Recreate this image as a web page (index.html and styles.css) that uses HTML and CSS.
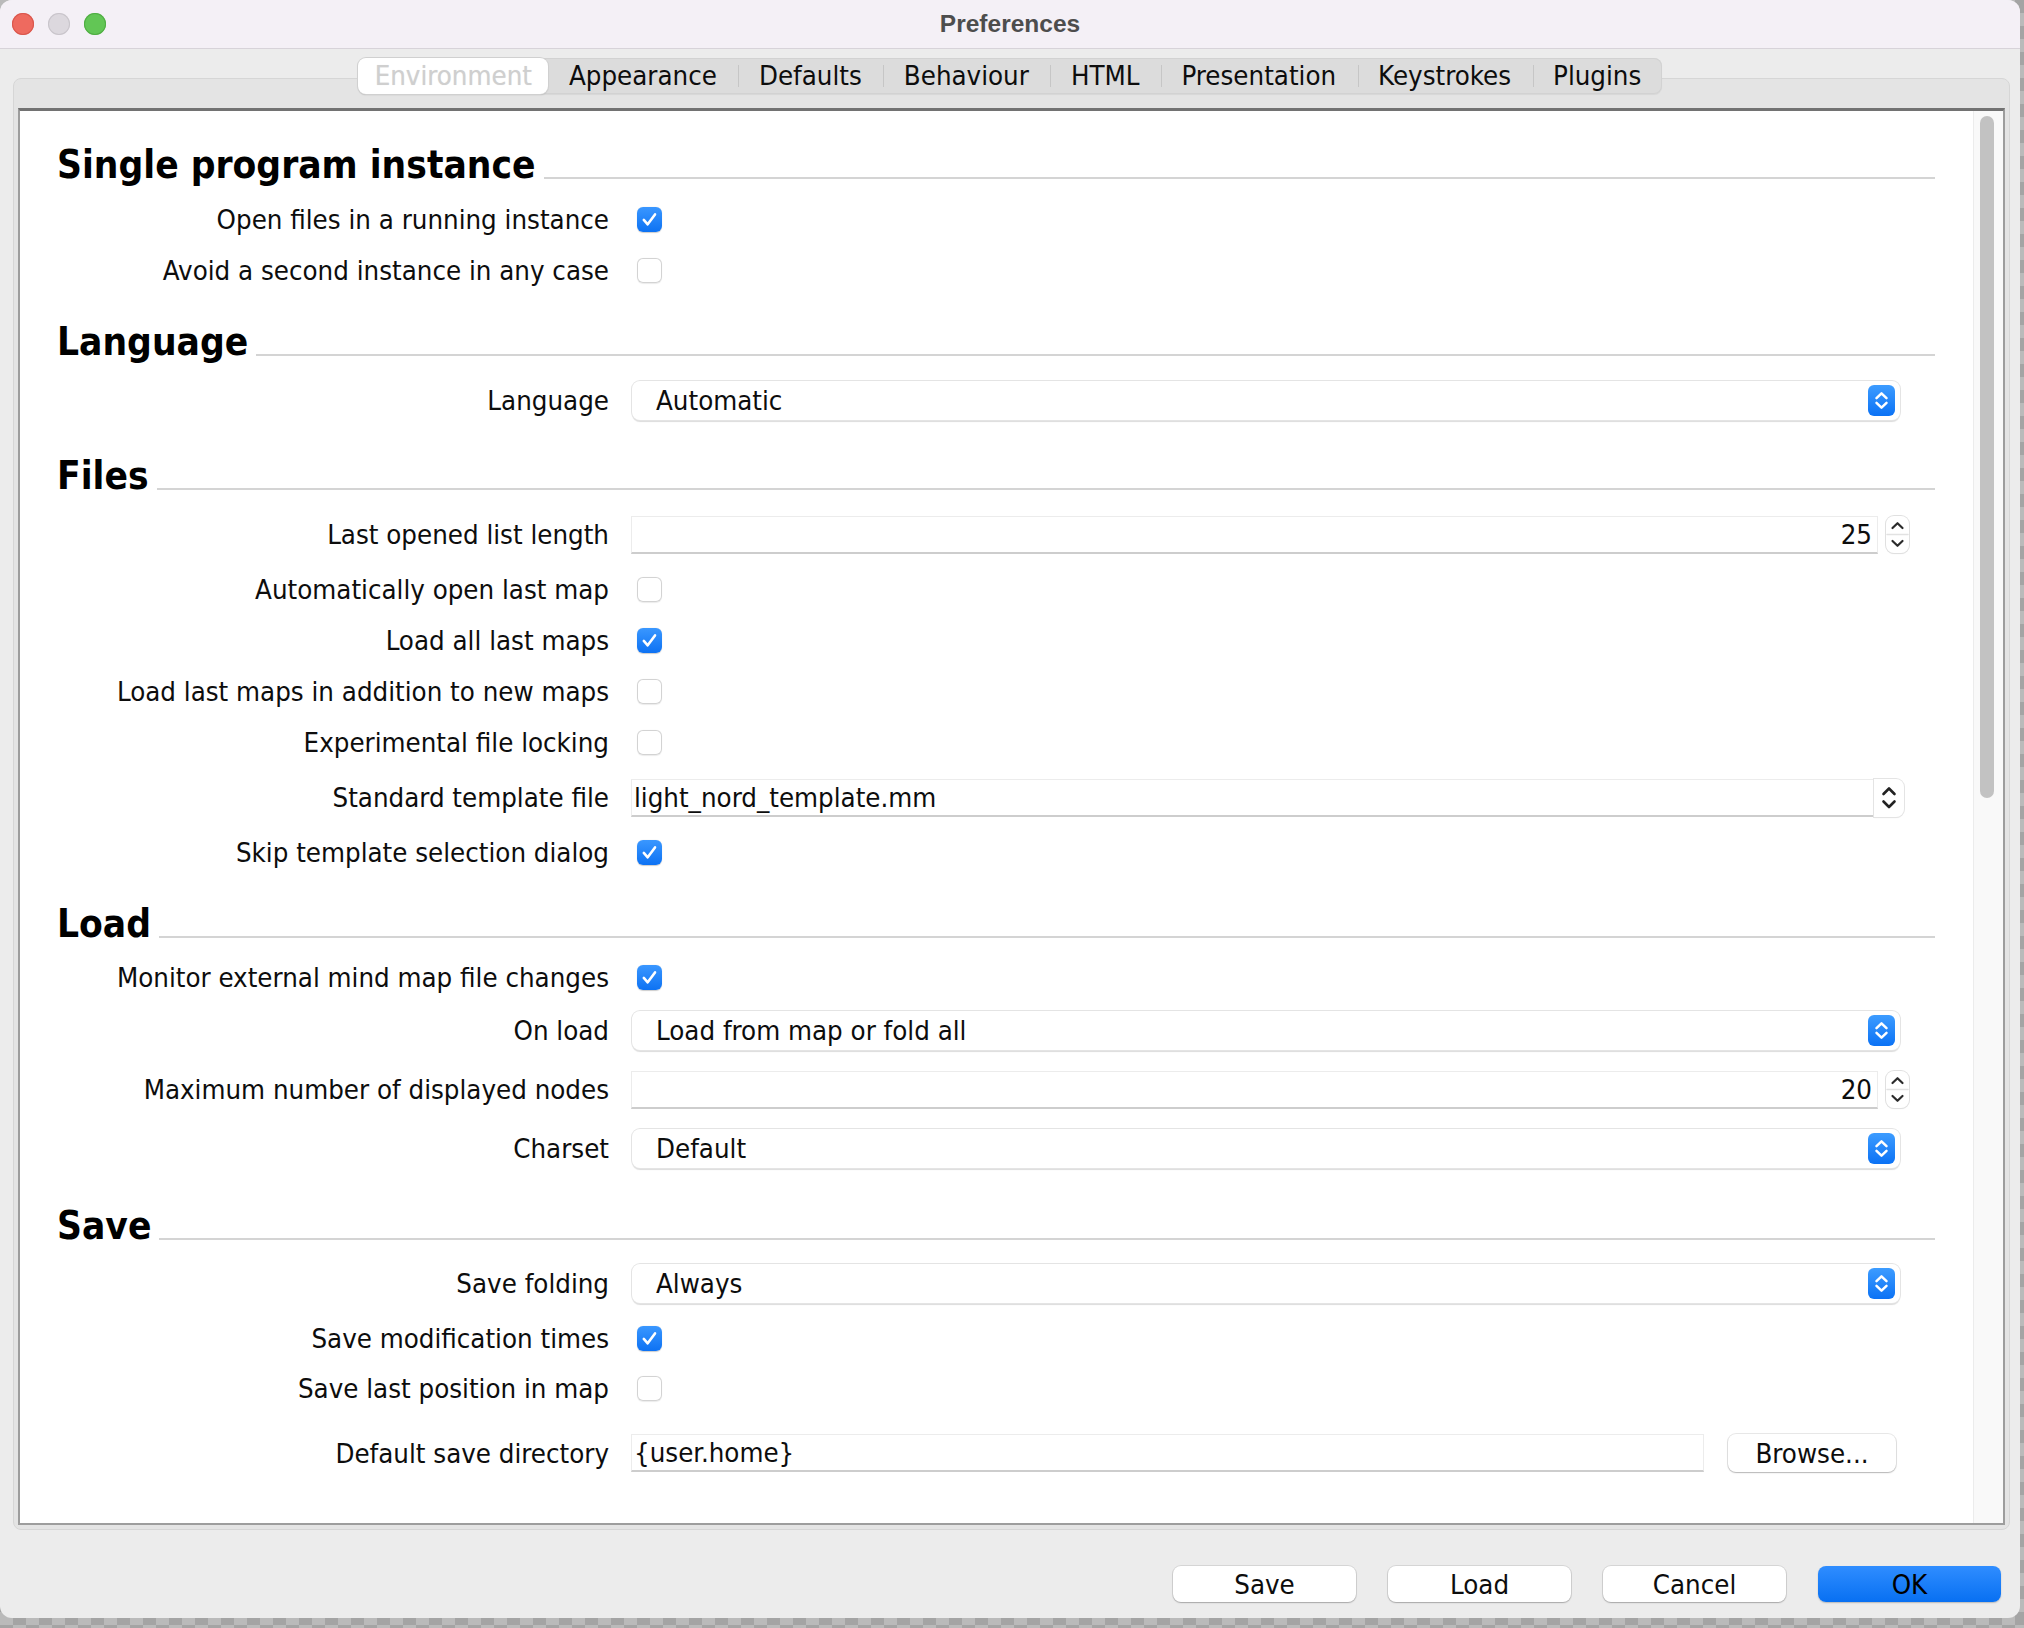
FILE: index.html
```html
<!DOCTYPE html>
<html lang="en">
<head>
<meta charset="utf-8">
<title>Preferences</title>
<link rel="stylesheet" href="styles.css">
</head>
<body>
<div class="window">
  <header class="titlebar">
    <div class="lights">
      <span class="light red"></span>
      <span class="light idle"></span>
      <span class="light green"></span>
    </div>
    <div class="title">Preferences</div>
    <div></div>
  </header>

  <nav class="tabs">
    <span class="tab selected">Environment</span>
    <span class="tab">Appearance</span>
    <span class="tab sep">Defaults</span>
    <span class="tab sep">Behaviour</span>
    <span class="tab sep">HTML</span>
    <span class="tab sep">Presentation</span>
    <span class="tab sep">Keystrokes</span>
    <span class="tab sep">Plugins</span>
  </nav>

  <div class="pane">
    <div class="content">
      <div class="scroll-area">

        <div class="section-title"><h2>Single program instance</h2><span class="rule"></span></div>
        <div class="row row-cb"><span class="lbl">Open files in a running instance</span><div class="ctl"><span class="cb on"><svg viewBox="0 0 25 25" width="25" height="25"><path d="M6.8 12.9 L10.7 17.3 L18 7.4" /></svg></span></div></div>
        <div class="row row-cb"><span class="lbl">Avoid a second instance in any case</span><div class="ctl"><span class="cb"></span></div></div>

        <div class="section-title"><h2>Language</h2><span class="rule"></span></div>
        <div class="row row-ctl"><span class="lbl">Language</span><div class="ctl">
          <div class="combo"><span>Automatic</span><span class="combo-btn"><svg viewBox="0 0 27 31" width="27" height="31"><path d="M8.5 13.2 L13.5 8.4 L18.5 13.2 M8.5 17.8 L13.5 22.6 L18.5 17.8" /></svg></span></div>
        </div></div>

        <div class="section-title"><h2>Files</h2><span class="rule"></span></div>
        <div class="row row-ctl"><span class="lbl">Last opened list length</span><div class="ctl">
          <div class="field num">25</div>
          <span class="spinner"><svg viewBox="0 0 23 37" width="23" height="37"><path class="div" d="M1 18.5 H22" /><path d="M6.5 12 L11.5 7.2 L16.5 12 M6.5 25 L11.5 29.8 L16.5 25" /></svg></span>
        </div></div>
        <div class="row row-cb"><span class="lbl">Automatically open last map</span><div class="ctl"><span class="cb"></span></div></div>
        <div class="row row-cb"><span class="lbl">Load all last maps</span><div class="ctl"><span class="cb on"><svg viewBox="0 0 25 25" width="25" height="25"><path d="M6.8 12.9 L10.7 17.3 L18 7.4" /></svg></span></div></div>
        <div class="row row-cb"><span class="lbl">Load last maps in addition to new maps</span><div class="ctl"><span class="cb"></span></div></div>
        <div class="row row-cb"><span class="lbl">Experimental file locking</span><div class="ctl"><span class="cb"></span></div></div>
        <div class="row row-ctl"><span class="lbl">Standard template file</span><div class="ctl">
          <div class="field edit">light_nord_template.mm</div>
          <span class="edit-arrow"><svg viewBox="0 0 30 38" width="30" height="38"><path d="M9.5 15 L15 9.5 L20.5 15 M9.5 22.5 L15 28 L20.5 22.5" /></svg></span>
        </div></div>
        <div class="row row-cb"><span class="lbl">Skip template selection dialog</span><div class="ctl"><span class="cb on"><svg viewBox="0 0 25 25" width="25" height="25"><path d="M6.8 12.9 L10.7 17.3 L18 7.4" /></svg></span></div></div>

        <div class="section-title"><h2>Load</h2><span class="rule"></span></div>
        <div class="row row-cb row-tight"><span class="lbl">Monitor external mind map file changes</span><div class="ctl"><span class="cb on"><svg viewBox="0 0 25 25" width="25" height="25"><path d="M6.8 12.9 L10.7 17.3 L18 7.4" /></svg></span></div></div>
        <div class="row row-ctl"><span class="lbl">On load</span><div class="ctl">
          <div class="combo"><span>Load from map or fold all</span><span class="combo-btn"><svg viewBox="0 0 27 31" width="27" height="31"><path d="M8.5 13.2 L13.5 8.4 L18.5 13.2 M8.5 17.8 L13.5 22.6 L18.5 17.8" /></svg></span></div>
        </div></div>
        <div class="row row-ctl"><span class="lbl">Maximum number of displayed nodes</span><div class="ctl">
          <div class="field num">20</div>
          <span class="spinner"><svg viewBox="0 0 23 37" width="23" height="37"><path class="div" d="M1 18.5 H22" /><path d="M6.5 12 L11.5 7.2 L16.5 12 M6.5 25 L11.5 29.8 L16.5 25" /></svg></span>
        </div></div>
        <div class="row row-ctl"><span class="lbl">Charset</span><div class="ctl">
          <div class="combo"><span>Default</span><span class="combo-btn"><svg viewBox="0 0 27 31" width="27" height="31"><path d="M8.5 13.2 L13.5 8.4 L18.5 13.2 M8.5 17.8 L13.5 22.6 L18.5 17.8" /></svg></span></div>
        </div></div>

        <div class="section-title section-wide"><h2>Save</h2><span class="rule"></span></div>
        <div class="row row-ctl"><span class="lbl">Save folding</span><div class="ctl">
          <div class="combo"><span>Always</span><span class="combo-btn"><svg viewBox="0 0 27 31" width="27" height="31"><path d="M8.5 13.2 L13.5 8.4 L18.5 13.2 M8.5 17.8 L13.5 22.6 L18.5 17.8" /></svg></span></div>
        </div></div>
        <div class="row row-cb row-save"><span class="lbl">Save modification times</span><div class="ctl"><span class="cb on"><svg viewBox="0 0 25 25" width="25" height="25"><path d="M6.8 12.9 L10.7 17.3 L18 7.4" /></svg></span></div></div>
        <div class="row row-cb row-save"><span class="lbl">Save last position in map</span><div class="ctl"><span class="cb"></span></div></div>
        <div class="row row-dir"><span class="lbl">Default save directory</span><div class="ctl">
          <div class="field edit">{user.home}</div>
          <span class="btn browse">Browse...</span>
        </div></div>

      </div>
      <div class="scrollbar"><div class="thumb"></div></div>
    </div>
  </div>

  <div class="actions">
    <span class="btn">Save</span>
    <span class="btn">Load</span>
    <span class="btn">Cancel</span>
    <span class="btn default">OK</span>
  </div>
</div>
</body>
</html>
```

FILE: styles.css
```css
* { box-sizing: border-box; }

html, body {
  margin: 0;
  padding: 0;
}

body {
  width: 2024px;
  height: 1628px;
  overflow: hidden;
  background: repeating-conic-gradient(#a4a4a4 0 25%, #bababa 0 50%) 0 0 / 26px 26px;
  font-family: "DejaVu Sans Condensed", "Liberation Sans", Arial, sans-serif;
  font-size: 27.4px;
  color: #0d0d0d;
}

.window {
  width: 2020px;
  height: 1618px;
  background: #ececec;
  border-radius: 12px;
  overflow: hidden;
  display: flex;
  flex-direction: column;
}

/* title bar */
.titlebar {
  height: 49px;
  flex: none;
  background: #f4f0f6;
  border-bottom: 1px solid #d7d3d9;
  display: grid;
  grid-template-columns: 1fr auto 1fr;
  align-items: center;
}

.lights {
  display: flex;
  gap: 14px;
  padding-left: 12px;
}

.light {
  width: 22px;
  height: 22px;
  border-radius: 50%;
}
.light.red { background: #ee6a5f; box-shadow: inset 0 0 0 1px #d9574d; }
.light.idle { background: #dcd8de; box-shadow: inset 0 0 0 1px #c9c5cb; }
.light.green { background: #62c655; box-shadow: inset 0 0 0 1px #50ad44; }

.title {
  font-family: "Liberation Sans", Arial, sans-serif;
  font-weight: 700;
  font-size: 24.5px;
  color: #4d4d4d;
}

/* tabs */
.tabs {
  align-self: center;
  margin-top: 9px;
  height: 36px;
  display: flex;
  align-items: stretch;
  background: #dcdcdc;
  border-radius: 8px;
  box-shadow: inset 0 0 0 1px #d2d2d2, 0 1px 1px rgba(0,0,0,0.06);
  position: relative;
  z-index: 1;
}

.tab {
  display: flex;
  align-items: center;
  padding: 0 20.5px;
  color: #0d0d0d;
  line-height: 1;
}

.tab.sep {
  border-left: 1px solid transparent;
  background: linear-gradient(#c6c6c6, #c6c6c6) left center / 1px 22px no-repeat;
}

.tab.selected {
  padding: 0 16.5px;
  background: #fff;
  border-radius: 8px;
  color: #cfcfcf;
  text-shadow: 0 0 1px #e6e6e6;
  box-shadow: 0 0 0 1px #d0d0d0, 0 1px 1.5px rgba(0,0,0,0.18);
}

/* pane */
.pane {
  margin: -16px 10px 0 13px;
  height: 1452px;
  flex: none;
  background: #e4e4e4;
  border: 1px solid #d6d6d6;
  border-radius: 8px;
  padding: 29px 4px 4px 4px;
}

.content {
  height: 1417px;
  background: #fff;
  border: 2px solid #9d9d9d;
  border-top: 3px solid #727272;
  display: flex;
  overflow: hidden;
}

.scroll-area {
  flex: 1;
  padding: 8px 38px 0 37px;
  overflow: hidden;
}

.scrollbar {
  width: 30px;
  flex: none;
  background: #f9f9f9;
  border-left: 1px solid #ececec;
  padding: 5px 0 0 6px;
}

.thumb {
  width: 14px;
  height: 682px;
  border-radius: 7px;
  background: #c2c2c2;
}

/* sections */
.section-title {
  height: 75px;
  padding-top: 18px;
  display: flex;
  align-items: center;
}

.section-title.section-wide {
  height: 76px;
  padding-top: 20px;
}

.section-title h2 {
  margin: 0;
  font-size: 38.5px;
  font-weight: 700;
  line-height: 1;
  color: #000;
  flex: none;
}

.rule {
  flex: 1;
  height: 2px;
  margin: 25px 0 0 8px;
  background: #d4d4d4;
}

.row {
  display: flex;
  align-items: center;
}

.row-cb { height: 51px; }
.row-cb.row-tight { height: 48px; }
.row-cb.row-save { height: 50px; }
.row-ctl { height: 59px; }
.row-dir { height: 80px; }

.lbl {
  width: 552px;
  flex: none;
  text-align: right;
  white-space: nowrap;
}

.ctl {
  flex: 1;
  margin-left: 22px;
  display: flex;
  align-items: center;
}

/* checkbox */
.cb {
  width: 25px;
  height: 25px;
  margin-left: 6px;
  border-radius: 6px;
  background: #fff;
  box-shadow: inset 0 0 0 1px #d3d3d3, 0 0.5px 1px rgba(0,0,0,0.08);
  display: flex;
}

.cb.on {
  background: linear-gradient(#3a97ff, #0d72f3);
  box-shadow: 0 0.5px 1px rgba(0,0,0,0.2);
}

.cb svg path {
  fill: none;
  stroke: #fff;
  stroke-width: 2.6;
  stroke-linecap: round;
  stroke-linejoin: round;
}

/* combo */
.combo {
  flex: 1;
  margin: 0 35px 0 1px;
  height: 39px;
  background: #fff;
  border-radius: 8px;
  box-shadow: 0 0 0 1px #e4e4e4, 0 1.5px 1px rgba(0,0,0,0.14);
  display: flex;
  align-items: center;
  justify-content: space-between;
  padding: 0 5px 0 24px;
  white-space: nowrap;
}

.combo-btn {
  width: 27px;
  height: 31px;
  border-radius: 6px;
  background: linear-gradient(#3d9cff, #0b72f5);
  display: flex;
}

.combo-btn svg path {
  fill: none;
  stroke: #fff;
  stroke-width: 2.5;
  stroke-linecap: round;
  stroke-linejoin: round;
}

/* text fields */
.field {
  flex: 1;
  height: 38px;
  background: #fff;
  border: 1px solid #ececec;
  border-bottom: 2px solid #cdcdcd;
  display: flex;
  align-items: center;
  white-space: nowrap;
}

.field.num {
  justify-content: flex-end;
  padding-right: 5px;
}

.field.edit {
  padding-left: 2px;
}

.spinner {
  width: 23px;
  height: 37px;
  margin: 0 26px 0 8px;
  border-radius: 8px;
  background: #fff;
  box-shadow: 0 0 0 1px #e0e0e0, 0 1px 1px rgba(0,0,0,0.12);
  display: flex;
}

.spinner svg path {
  fill: none;
  stroke: #2b2b2b;
  stroke-width: 2.2;
  stroke-linecap: round;
  stroke-linejoin: round;
}

.spinner svg path.div {
  stroke: #e2e2e2;
  stroke-width: 1.5;
}

.edit-arrow {
  width: 30px;
  height: 38px;
  margin-right: 31px;
  border-radius: 0 8px 8px 0;
  background: #fff;
  box-shadow: 0 0 0 1px #e4e4e4, 0 1px 1px rgba(0,0,0,0.12);
  display: flex;
}

.edit-arrow svg path {
  fill: none;
  stroke: #222;
  stroke-width: 2.6;
  stroke-linecap: round;
  stroke-linejoin: round;
}

/* buttons */
.btn {
  height: 36px;
  width: 183px;
  border-radius: 8px;
  background: #fff;
  box-shadow: 0 0 0 1px rgba(0,0,0,0.09), 0 1px 1.5px rgba(0,0,0,0.22);
  display: flex;
  align-items: center;
  justify-content: center;
  white-space: nowrap;
}

.btn.browse {
  width: 168px;
  height: 38px;
  margin: 0 39px 0 24px;
}

.btn.default {
  background: linear-gradient(#2f8dff, #0870f2);
  box-shadow: 0 1px 1.5px rgba(0,0,0,0.22);
  color: #000;
}

.actions {
  flex: none;
  margin-top: 36px;
  padding-right: 19px;
  display: flex;
  justify-content: flex-end;
  gap: 32px;
}
```
